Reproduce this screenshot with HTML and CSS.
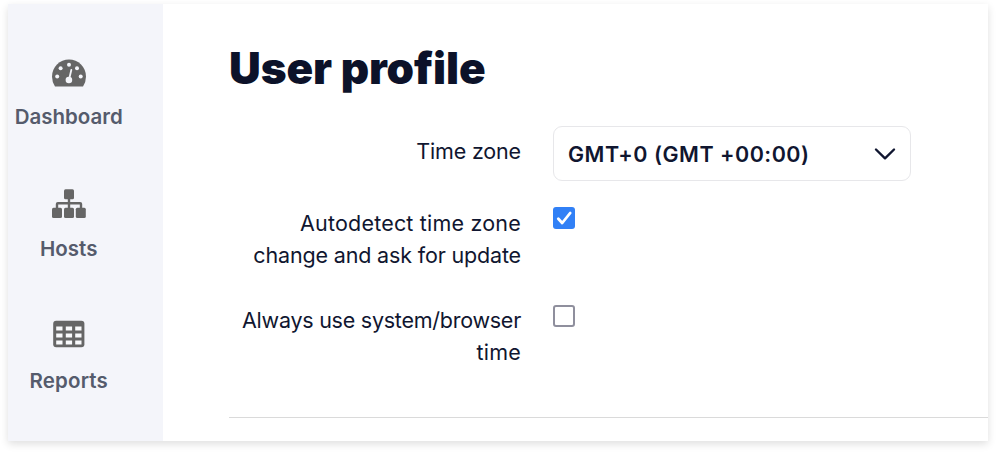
FILE: index.html
```
<!DOCTYPE html>
<html lang="en">
<head>
<meta charset="utf-8">
<title>User profile</title>
<link rel="stylesheet" href="styles.css">
</head>
<body>
<div class="window">
  <nav class="sidebar">
    <a class="nav-item">
      <svg class="icon" width="34" height="32" viewBox="0 0 34 32">
        <path fill="#666" d="M3 29.5Q0 25 0 19.500a17 17 0 0 1 34 0Q34 25 31 29.500Z"/>
        <g fill="#f4f5fa"><circle cx="17" cy="7.800" r="2"/><circle cx="8.600" cy="11.300" r="2"/><circle cx="25" cy="11.300" r="2"/><circle cx="5.200" cy="19.500" r="2"/><circle cx="28.700" cy="19.500" r="2"/><circle cx="16.900" cy="23" r="3.300"/></g>
        <path d="M17.200 22 19.300 13" stroke="#f4f5fa" stroke-width="1.800" stroke-linecap="round"/>
      </svg>
      <span class="nav-label dashboard">Dashboard</span>
    </a>
    <a class="nav-item">
      <svg class="icon" width="34" height="32" viewBox="0 0 34 32">
        <g transform="translate(0 -.7)"><g fill="#666"><rect x="12" y="1" width="10" height="10" rx="1.500"/><rect x="0" y="19.500" width="10" height="10.300" rx="1.500"/><rect x="12" y="19.500" width="10" height="10.300" rx="1.500"/><rect x="23.800" y="19.500" width="10" height="10.300" rx="1.500"/></g>
        <path d="M17 10v10M5 20v-4.200q0-.8.8-.8h22.400q.8 0 .8.800V20" fill="none" stroke="#666" stroke-width="2.400"/></g>
      </svg>
      <span class="nav-label hosts">Hosts</span>
    </a>
    <a class="nav-item">
      <svg class="icon" width="34" height="32" viewBox="0 0 34 32">
        <g transform="translate(0 -.5)"><rect x="1.200" y="1.300" width="31.200" height="26.500" rx="3" fill="#666"/>
        <path fill="#f9fafc" d="M4.200 7h6.300v4H4.200zM13.800 7h6.300v4h-6.300zM23.200 7h6.300v4h-6.300zM4.200 14h6.300v4H4.200zM13.800 14h6.300v4h-6.300zM23.200 14h6.300v4h-6.300zM4.200 21h6.300v4H4.200zM13.800 21h6.300v4h-6.300zM23.200 21h6.300v4h-6.300z"/></g>
      </svg>
      <span class="nav-label reports">Reports</span>
    </a>
  </nav>
  <main class="content">
    <h1 class="title">User profile</h1>
    <div class="row row-zone">
      <div class="label"><span class="l1">Time zone</span></div>
      <div class="select"><span class="value">GMT+0 (GMT +00:00)</span>
        <svg width="22" height="14" viewBox="0 0 22 14"><path d="M2 2.500 11 11.300 20 2.500" fill="none" stroke="#101630" stroke-width="2.400" stroke-linecap="round" stroke-linejoin="round"/></svg>
      </div>
    </div>
    <div class="row row-auto">
      <div class="label"><span class="l2">Autodetect time zone</span><br><span class="l3">change and ask for update</span></div>
      <div class="check checked"><svg width="22" height="22" viewBox="0 0 22 22"><path d="M5.300 11.800 9.200 16 17.200 6" fill="none" stroke="#fff" stroke-width="2.800" stroke-linecap="round" stroke-linejoin="round"/></svg></div>
    </div>
    <div class="row row-system">
      <div class="label"><span class="l4">Always use system/browser</span><br><span class="l5">time</span></div>
      <div class="check"></div>
    </div>
    <hr class="divider">
  </main>
</div>
</body>
</html>
```
FILE: styles.css
```
* { box-sizing: border-box; }
body { margin: 0; padding: 4px 0 0 7.500px; height: 453px; background: #fff; font-family: Inter, "Liberation Sans", sans-serif; color: #101630; overflow: hidden; }
.window { display: flex; width: 980.500px; height: 437px; background: #fff; box-shadow: 0 3px 8px rgba(0,0,0,.13); }
.sidebar { width: 155.500px; flex: none; background: #f4f5fa; padding: 53px 33px 0 0; display: flex; flex-direction: column; }
.nav-item { display: flex; flex: none; flex-direction: column; align-items: center; width: 122.500px; height: 131.500px; white-space: nowrap; }
.icon { display: block; flex: none; }
.nav-label { font-size: 20.500px; font-weight: 600; color: #555b6c; line-height: 28px; margin-top: 14px; }
.reports { letter-spacing: .15px; margin-top: 15px; }
.content { flex: 1; min-width: 0; padding: 37px 0 0 66px; }
.title { margin: 0; font-size: 44px; font-weight: 900; line-height: 54px; letter-spacing: -.1px; color: #0c1229; white-space: nowrap; }
.row { display: grid; grid-template-columns: 292px 358px; column-gap: 32px; }
.label { text-align: right; font-size: 21.500px; line-height: 32.300px; white-space: nowrap; }
.l1 { letter-spacing: -.15px; }
.l2 { letter-spacing: .2px; }
.l3 { letter-spacing: -.16px; }
.l4 { letter-spacing: -.25px; }
.l5 { letter-spacing: .2px; }
.row-zone { margin-top: 31px; height: 55px; }
.row-zone .label { padding-top: 9px; }
.select { height: 55px; border: 1px solid #e7e7ea; border-radius: 9px; display: flex; align-items: center; justify-content: space-between; padding: 0 14px; font-size: 21.500px; font-weight: 600; white-space: nowrap; }
.value { letter-spacing: .5px; }
.row-auto { margin-top: 26px; }
.row-auto .label, .row-system .label { margin-top: -.5px; }
.row-system { margin-top: 33.500px; }
.check { width: 22px; height: 22px; border: 2px solid #8f8f9d; border-radius: 3px; }
.checked { border: 0; background: #3180f6; }
.checked svg { display: block; }
.divider { margin: 48.500px 0 0; border: 0; border-top: 1px solid #dadada; }
```
